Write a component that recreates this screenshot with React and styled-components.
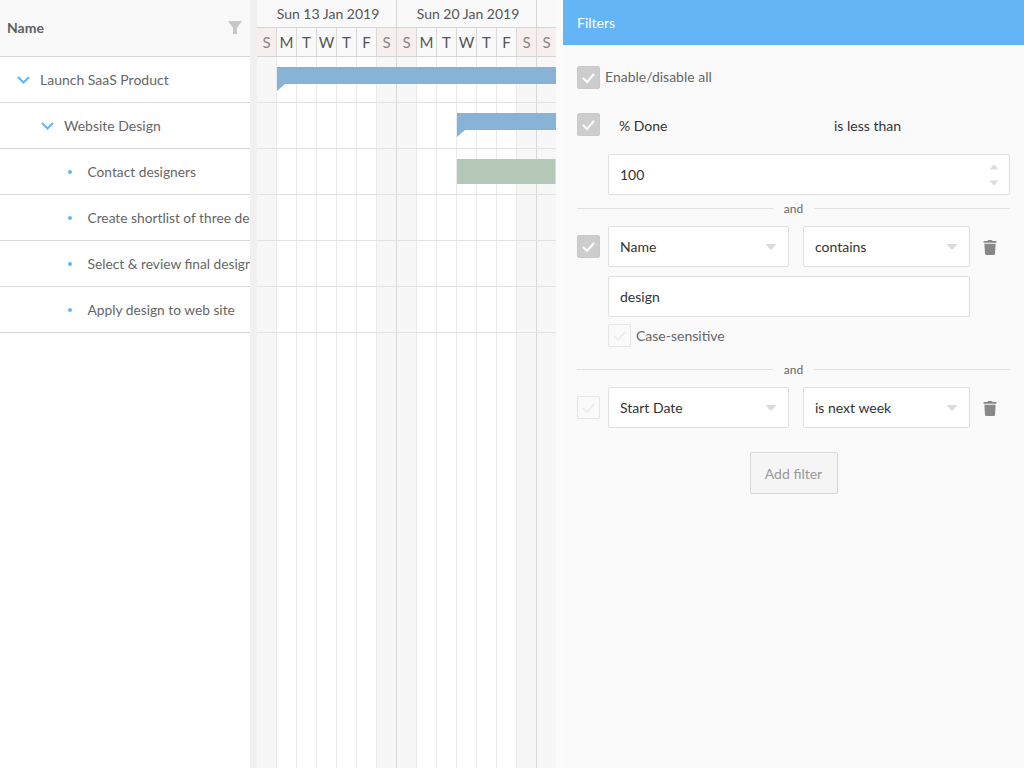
import React from 'react';
import styled, { createGlobalStyle } from 'styled-components';
import { FaTrash } from 'react-icons/fa';

const Global = createGlobalStyle`
  html, body { margin: 0; padding: 0; height: 100%; background: #fff; }
  body { font-family: Lato, "Open Sans", sans-serif; font-size: 14px; color: #333; }
  * { box-sizing: border-box; }
`;

const Page = styled.div`display: flex; width: 1024px; height: 768px; overflow: hidden;`;

const TreeGrid = styled.section`width: 250px; flex: none; background: #fff; overflow: hidden;`;
const TreeHeader = styled.div`
  height: 57px; display: flex; align-items: center; justify-content: space-between;
  padding: 0 8px 2px 7px; background: #f9f9f9; border-bottom: 1px solid #d5d5d5;
  font-weight: 700; color: #606060;
`;
const TreeRow = styled.div`
  height: 46px; display: flex; align-items: center; white-space: nowrap;
  padding-left: ${p => p.$indent}px; border-bottom: 1px solid #d9d9d9; color: #666;
  font-size: ${p => (p.$leaf ? '13.75px' : '14px')};
`;
const Expander = styled.span`width: 25px; flex: none; display: flex; align-items: center; padding-left: 2px;`;
const Bullet = styled.span`
  width: 4px; height: 4px; border-radius: 50%; background: #64b5f6; flex: none;
  margin: 1px 15.5px 0 0;
`;
const Splitter = styled.div`width: 7px; flex: none; background: #f0f0f0;`;

const Timeline = styled.section`width: 299px; flex: none; overflow: hidden; display: flex; flex-direction: column;`;
const WeekStrip = styled.div`display: flex; height: 28px; width: 300px; background: #f9f9f9; border-bottom: 1px solid #d5d5d5;`;
const WeekCell = styled.div`
  width: ${p => p.$w}px; flex: none; display: flex; align-items: center; justify-content: center;
  border-right: 1px solid #d5d5d5; color: #555; white-space: nowrap; padding-left: 3px;
`;
const DayStrip = styled.div`display: flex; height: 29px; width: 300px; border-bottom: 1px solid #d5d5d5; background: #f9f9f9;`;
const DayCell = styled.div`
  width: 20px; flex: none; display: flex; align-items: center; justify-content: center;
  font-size: 15px; border-right: 1px solid #d9d9d9;
  color: ${p => (p.$off ? '#888' : '#555')}; background: ${p => (p.$off ? '#f7efed' : 'transparent')};
`;
const Canvas = styled.div`position: relative; flex: 1;`;
const ColumnLayer = styled.div`position: absolute; inset: 0; display: flex; width: 300px;`;
const Column = styled.div`
  width: 20px; flex: none;
  background: ${p => (p.$off ? '#f7f7f7' : '#fff')};
  border-right: 1px solid ${p => (p.$week ? '#d9d9d9' : '#eaeaea')};
`;
const BarRow = styled.div`height: 46px; position: relative; border-bottom: 1px solid #e2e2e2;`;
const Bar = styled.div`
  position: absolute; top: 10px; left: ${p => p.$left}px; right: 0; height: 17px; background: #89b3d6;
  &::after {
    content: ''; position: absolute; left: 0; top: 17px; width: 0; height: 0;
    border-top: 7px solid #89b3d6; border-right: 8px solid transparent;
  }
`;
const TaskBar = styled.div`
  position: absolute; top: 10px; left: ${p => p.$left}px; width: 99px; height: 25px;
  background: #b3c8b6; border-right: 1px solid #c9e2ca;
`;
const Gutter = styled.div`width: 7px; flex: none; background: #fbfbfb;`;

const Panel = styled.aside`flex: 1; background: #fafafa; display: flex; flex-direction: column;`;
const PanelTitle = styled.header`
  height: 45px; flex: none; display: flex; align-items: center; padding: 0 14px;
  background: #64b5f6; color: #fff; font-size: 14px;
`;
const PanelBody = styled.div`padding: 21px 14px 0; display: flex; flex-direction: column;`;
const CheckBoxBase = styled.span`
  width: 23px; height: 23px; flex: none; display: flex; align-items: center; justify-content: center;
  border-radius: 2px;
  background: ${p => (p.$on ? '#cdcdcd' : 'transparent')};
  border: 1px solid ${p => (p.$on ? '#c9c9c9' : '#e6e6e6')};
`;
const CheckLabel = styled.div`display: flex; align-items: center; gap: 5px; color: #666;`;
const LabelText = styled.span`margin-bottom: ${p => p.$lift || 0}px;`;
const FilterRow = styled.div`display: flex; align-items: center; margin-top: ${p => p.$mt || 0}px;`;
const StaticField = styled.span`
  color: #333; padding: 2px 0 0 ${p => p.$pad || 0}px;
  width: ${p => (p.$w ? `${p.$w}px` : 'auto')}; flex: none;
`;
const Indented = styled.div`margin-left: 31px; margin-top: ${p => p.$mt || 0}px; width: ${p => p.$w}px;`;
const Field = styled.div`
  height: 41px; background: #fff; border: 1px solid #e0e0e0; border-radius: 2px;
  display: flex; align-items: center; justify-content: space-between; padding: 0 11px;
  color: #333; width: ${p => (p.$w ? `${p.$w}px` : '100%')}; flex: none;
  margin-left: ${p => p.$ml || 0}px;
`;
const Spinner = styled.span`display: flex; flex-direction: column; gap: 10px; margin-right: -1px;`;
const Separator = styled.div`
  display: flex; align-items: center; gap: 11px; font-size: 12px; color: #666;
  margin-top: ${p => p.$mt}px; height: 16px;
  &::before, &::after { content: ''; flex: 1; height: 1px; background: #e0e0e0; }
`;
const Remove = styled.span`margin-left: 13px; width: 14px; display: flex; justify-content: center; color: #888; padding-top: 1px;`;
const AddRow = styled.div`display: flex; justify-content: center; margin-top: 24px;`;
const AddButton = styled.button`
  width: 88px; height: 42px; background: #f5f5f5; border: 1px solid #d9d9d9; border-radius: 2px;
  font: inherit; color: #999; padding: 0;
`;

const Chevron = () => (
  <svg width="13" height="8" viewBox="0 0 13 8"><polyline points="1,1 6.5,6.5 12,1" fill="none" stroke="#64b5f6" strokeWidth="2" /></svg>
);
const Funnel = () => (
  <svg width="14" height="13" viewBox="0 0 14 13"><path d="M0 0H14L9 7V13H5V7Z" fill="#c8c8c8" /></svg>
);
const Check = ({ on }) => (
  <svg width="15" height="12" viewBox="0 0 15 12"><polyline points="2,6 6,10 13,2" fill="none" stroke={on ? '#fff' : '#eaeaea'} strokeWidth={on ? 2 : 1.5} /></svg>
);
const Tri = ({ up, w = 12, h = 6 }) => (
  <svg width={w} height={h} viewBox="0 0 12 6"><path d={up ? 'M0.5 6L5 0.8Q6 0 7 0.8L11.5 6Z' : 'M0.5 0H11.5L7 5.2Q6 6 5 5.2Z'} fill="#dcdcdc" /></svg>
);
const CheckBox = ({ on }) => <CheckBoxBase $on={on}><Check on={on} /></CheckBoxBase>;

const days = ['S', 'M', 'T', 'W', 'T', 'F', 'S', 'S', 'M', 'T', 'W', 'T', 'F', 'S', 'S'];
const isOff = i => days[i] === 'S';
const isWeekEnd = i => i === 6 || i === 13;

const rows = [
  { name: 'Launch SaaS Product', indent: 15, parent: true },
  { name: 'Website Design', indent: 39, parent: true },
  { name: 'Contact designers', indent: 68 },
  { name: 'Create shortlist of three designers', indent: 68 },
  { name: 'Select & review final design', indent: 68 },
  { name: 'Apply design to web site', indent: 68 },
];

export default function App() {
  return (
    <Page>
      <Global />
      <TreeGrid>
        <TreeHeader>Name<Funnel /></TreeHeader>
        {rows.map(r => (
          <TreeRow key={r.name} $indent={r.indent} $leaf={!r.parent}>
            {r.parent ? <Expander><Chevron /></Expander> : <Bullet />}
            {r.name}
          </TreeRow>
        ))}
      </TreeGrid>
      <Splitter />
      <Timeline>
        <WeekStrip>
          <WeekCell $w={140}>Sun 13 Jan 2019</WeekCell>
          <WeekCell $w={140}>Sun 20 Jan 2019</WeekCell>
          <WeekCell $w={20} />
        </WeekStrip>
        <DayStrip>
          {days.map((d, i) => <DayCell key={i} $off={isOff(i)}>{d}</DayCell>)}
        </DayStrip>
        <Canvas>
          <ColumnLayer>
            {days.map((d, i) => <Column key={i} $off={isOff(i)} $week={isWeekEnd(i)} />)}
          </ColumnLayer>
          <BarRow><Bar $left={20} /></BarRow>
          <BarRow><Bar $left={200} /></BarRow>
          <BarRow><TaskBar $left={200} /></BarRow>
          <BarRow />
          <BarRow />
          <BarRow />
        </Canvas>
      </Timeline>
      <Gutter />
      <Panel>
        <PanelTitle>Filters</PanelTitle>
        <PanelBody>
          <CheckLabel><CheckBox on /><LabelText $lift={2}>Enable/disable all</LabelText></CheckLabel>
          <FilterRow $mt={24}>
            <CheckBox on />
            <StaticField $w={234} $pad={19}>% Done</StaticField>
            <StaticField>is less than</StaticField>
          </FilterRow>
          <Indented $mt={18} $w={402}>
            <Field>100<Spinner><Tri up w={10} h={6} /><Tri w={10} h={6} /></Spinner></Field>
          </Indented>
          <Separator $mt={5}>and</Separator>
          <FilterRow $mt={10}>
            <CheckBox on />
            <Field $w={181} $ml={8}>Name<Tri /></Field>
            <Field $w={167} $ml={14}>contains<Tri /></Field>
            <Remove><FaTrash size={15} /></Remove>
          </FilterRow>
          <Indented $mt={9} $w={362}><Field>design</Field></Indented>
          <Indented $mt={7}>
            <CheckLabel><CheckBox /><span>Case-sensitive</span></CheckLabel>
          </Indented>
          <Separator $mt={14}>and</Separator>
          <FilterRow $mt={10}>
            <CheckBox />
            <Field $w={181} $ml={8}>Start Date<Tri /></Field>
            <Field $w={167} $ml={14}>is next week<Tri /></Field>
            <Remove><FaTrash size={15} /></Remove>
          </FilterRow>
          <AddRow><AddButton>Add filter</AddButton></AddRow>
        </PanelBody>
      </Panel>
    </Page>
  );
}
